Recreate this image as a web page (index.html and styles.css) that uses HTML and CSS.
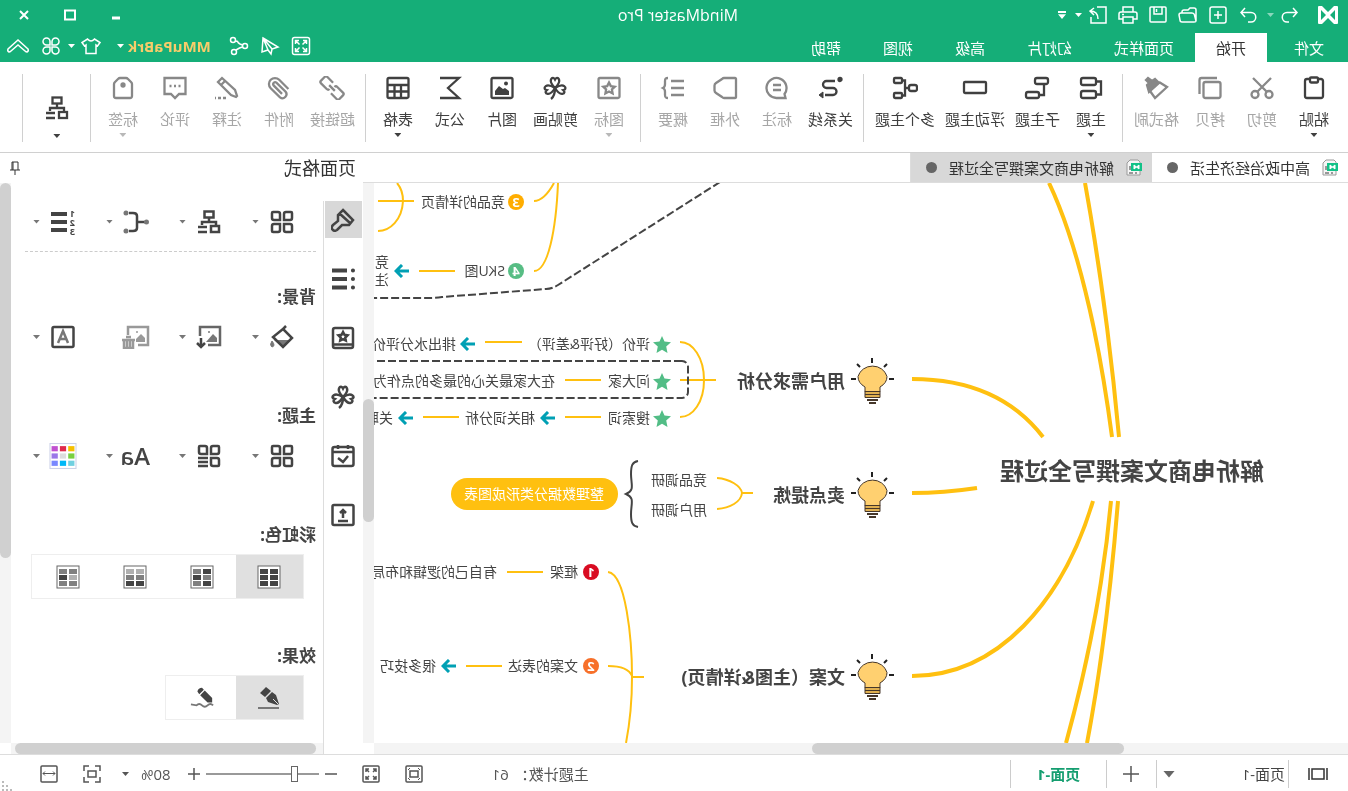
FILE: index.html
```html
<!DOCTYPE html>
<html lang="zh-CN">
<head>
<meta charset="utf-8">
<title>MindMaster Pro</title>
<link rel="stylesheet" href="styles.css">
</head>
<body>
<svg class="defs" aria-hidden="true">
  <symbol id="logo" viewBox="0 0 20 18"><path d="M0 1q0-1 1-1h3l6 6 6-6h3q1 0 1 1v16q0 1-1 1h-3l-6-6-6 6H1q-1 0-1-1z" fill="#fff"/><path d="M3 4v10l5-5zM17 4v10l-5-5z" fill="#15ae78"/></symbol>
  <symbol id="undo" viewBox="0 0 20 20"><path d="M7 3 3 7.500 7 12M3 7.500h10a4.500 4.500 0 0 1 0 9.500h-2"/></symbol>
  <symbol id="redo" viewBox="0 0 20 20"><path d="m13 3 4 4.500-4 4.500M17 7.500H7a4.500 4.500 0 0 0 0 9.500h3"/></symbol>
  <symbol id="new" viewBox="0 0 20 20"><rect x="2" y="2" width="16" height="16" rx="2"/><path d="M10 6v8M6 10h8"/></symbol>
  <symbol id="open" viewBox="0 0 20 20"><path d="M2 16V5q0-2 2-2h4l2 2h4q2 0 2 2v1M2 16q0 1 2 1h12q2 0 2-2l1-5q0-2-2-2H6Q4 8 3.500 10z"/></symbol>
  <symbol id="save" viewBox="0 0 20 20"><rect x="2" y="2" width="16" height="15" rx="1"/><path d="M6 2v7h8V2M11.500 4v3"/></symbol>
  <symbol id="print" viewBox="0 0 20 20"><path d="M5 7V2h10v5M5 14H1V9q0-2 2-2h14q2 0 2 2v5h-4M5 12h10v6H5zM14 9.500h2"/></symbol>
  <symbol id="export" viewBox="0 0 20 20"><path d="M11 2H2v16h15v-6M14 3l4 3-4 4M18 6c-5 0-8 2-8 8"/></symbol>
  <symbol id="full" viewBox="0 0 20 20"><rect x="1.500" y="1.500" width="17" height="17" rx="2"/><path d="M4.500 8V4.500H8M12 4.500h3.500V8M15.500 12v3.500H12M8 15.500H4.500V12M5 5l3.500 3.500M15 5l-3.500 3.500M15 15l-3.500-3.500M5 15l3.500-3.500"/></symbol>
  <symbol id="send" viewBox="0 0 20 20"><path d="M17 2 2 11l6 2 1 5 3-4 6 2zM8 13l9-11-5 12"/></symbol>
  <symbol id="share" viewBox="0 0 20 20"><circle cx="4" cy="10" r="2.500"/><circle cx="16" cy="4" r="2.500"/><circle cx="15" cy="16" r="2.500"/><path d="M6.500 9 9 8q2-1 2.500-2.500L13.500 5M6.500 11l3 1 3.500 2"/></symbol>
  <symbol id="shirt" viewBox="0 0 20 20"><path d="M6.500 3Q10 7 13.500 3L19 6.500 16.500 10 15 9v8.500H5V9l-1.500 1L1 6.500z"/></symbol>
  <symbol id="apps" viewBox="0 0 20 20"><path d="M9 9H5.500A3.500 3.500 0 1 1 9 5.500zM11 9h3.500A3.500 3.500 0 1 0 11 5.500zM9 11H5.500A3.500 3.500 0 1 0 9 14.500zM11 11h3.500a3.500 3.500 0 1 1-3.500 3.500z"/></symbol>
  <symbol id="up" viewBox="0 0 24 20"><path d="M2 13 12 4l10 9q1 2-1 3-1 0-2-1l-7-6-7 6q-1 1-2 1-2-1-1-3z"/></symbol>

  <symbol id="paste" viewBox="0 0 24 24"><rect x="3" y="3" width="18" height="19" rx="2"/><rect x="8" y="1.500" width="8" height="5" rx="1" fill="#fff"/></symbol>
  <symbol id="cut" viewBox="0 0 24 24"><path d="m3 2 14 14M21 2 7 16"/><circle cx="5" cy="18.500" r="3.500"/><circle cx="19" cy="18.500" r="3.500"/></symbol>
  <symbol id="copy" viewBox="0 0 24 24"><rect x="1.500" y="6" width="17" height="16" rx="2"/><path d="M5 2h15.500q2 0 2 2v14"/></symbol>
  <symbol id="brush" viewBox="0 0 24 24"><path d="M9 6 1 11l12 11 5-7"/><path d="m22 4-2-2-4 3-3-2-4 4 10 9 2-7-2-2z" fill="currentColor"/></symbol>
  <symbol id="topic" viewBox="0 0 24 24"><rect x="7" y="2" width="15" height="7" rx="2"/><rect x="7" y="15" width="15" height="7" rx="2"/><path d="M7 5.500H2v13h5"/></symbol>
  <symbol id="sub" viewBox="0 0 24 24"><rect x="1" y="2" width="13" height="6" rx="2"/><rect x="10" y="16" width="13" height="6" rx="2"/><path d="M5 8v11h5"/></symbol>
  <symbol id="float" viewBox="0 0 24 24"><rect x="1" y="6" width="22" height="11" rx="1"/></symbol>
  <symbol id="multi" viewBox="0 0 26 24"><rect x="1" y="9" width="8" height="6" rx="2"/><rect x="16" y="2" width="8" height="5" rx="1"/><rect x="16" y="17" width="8" height="5" rx="1"/><path d="M9 12h4M16 4.500h-3v15h3"/></symbol>
  <symbol id="relation" viewBox="0 0 24 24"><path d="M7 5h8.500a3.500 3.500 0 0 1 0 7H9a3.500 3.500 0 0 0 0 7h8"/><path d="m19 16 4 3-4 3z" fill="currentColor" stroke-width="1"/><circle cx="2" cy="3.500" r="1.500" fill="currentColor"/></symbol>
  <symbol id="callout" viewBox="0 0 24 24"><path d="M4.500 18A10 10 0 1 1 12 22H3.500zM8 9h8M8 14h8"/></symbol>
  <symbol id="outer" viewBox="0 0 24 24"><path d="M2 2h11q1 0 2 1l6 4q1.500 1 1.500 2.500v5q0 1.500-1.500 2.500l-6 4q-1 1-2 1H2q-1 0-1-1V3q0-1 1-1z"/></symbol>
  <symbol id="summary" viewBox="0 0 24 24"><path d="M1 5h13M1 12h13M1 19h13M17 2c3 0 3 1 3 3v3c0 2 0 3 2 4-2 1-2 2-2 4v3c0 2 0 3-3 3"/></symbol>
  <symbol id="starbox" viewBox="0 0 24 24"><rect x="1.500" y="2" width="21" height="20" rx="1.500"/><path d="m12 6.500 1.800 3.600 4 .6-2.900 2.800.7 4L12 15.600l-3.600 1.900.7-4-2.900-2.800 4-.6z"/></symbol>
  <symbol id="clover" viewBox="0 0 24 24"><path d="M12 12C8 8 7 6 8 3.500 9 1 11 1.500 12 3.500c1-2 3-2.500 4 0C17 6 16 8 12 12z"/><path d="M12 12C8 8 7 6 8 3.500 9 1 11 1.500 12 3.500c1-2 3-2.500 4 0C17 6 16 8 12 12z" transform="rotate(104 12 12)"/><path d="M12 12C8 8 7 6 8 3.500 9 1 11 1.500 12 3.500c1-2 3-2.500 4 0C17 6 16 8 12 12z" transform="rotate(-104 12 12)"/><path d="M12 12q0 8 4 11"/></symbol>
  <symbol id="pic" viewBox="0 0 24 24"><rect x="1.500" y="2" width="21" height="20" rx="1.500"/><path d="M5 19v-4l4-3 2 1 4-3 4 5v4z" fill="currentColor" stroke="none"/><circle cx="8" cy="7.500" r="2" fill="currentColor" stroke="none"/></symbol>
  <symbol id="sigma" viewBox="0 0 24 24"><path d="M22 2H3l11 10L3 22h19"/></symbol>
  <symbol id="table" viewBox="0 0 24 24"><rect x="1.500" y="2" width="21" height="20" rx="1.500"/><path d="M2 9h20M2 15.500h20M9 9v13M15.500 9v13"/></symbol>
  <symbol id="link" viewBox="0 0 24 24"><path d="M8 12h8M9 16.500H1q-2 0-2-2v-5q0-2 2-2h8q2 0 2 2M15 7.500h8q2 0 2 2v5q0 2-2 2h-8q-2 0-2-2" transform="rotate(-45 12 12)"/></symbol>
  <symbol id="clip" viewBox="0 0 24 24"><path d="m21.400 11-9.200 9.200a6 6 0 0 1-8.500-8.500L13 2.600a4 4 0 0 1 5.600 5.600l-9.200 9.200a2 2 0 0 1-2.800-2.800L15 6.100" transform="rotate(180 12 12)"/></symbol>
  <symbol id="note" viewBox="0 0 24 24"><path d="m17 2 4 4L8 19l-5 2-1-1 2-6zM14 5l4 4"/><path d="M13 22h11" stroke-dasharray="3 2"/></symbol>
  <symbol id="comment" viewBox="0 0 24 24"><path d="M1.500 2h21v16H16l-4 4-4-4H1.500z"/><path d="M6.500 10h2M11 10h2M15.500 10h2"/></symbol>
  <symbol id="tag" viewBox="0 0 24 24"><path d="M9 2h6q1 0 2 1l3 3q1 1 1 2v12q0 2-2 2H5q-2 0-2-2V8q0-1 1-2l3-3q1-1 2-1z"/><circle cx="12" cy="9" r="1.500" fill="currentColor"/></symbol>
  <symbol id="org" viewBox="0 0 24 24"><rect x="7.500" y="1.500" width="9" height="6"/><path d="M12 8v4M5 15v-3h14v3M14 17h9M14 22h9"/><rect x="2" y="16" width="8" height="6"/></symbol>

  <symbol id="leaf4" viewBox="0 0 24 24"><path d="M3 2h5q2 0 2 2v6H4q-2 0-2-2V3q0-1 1-1zM16 2h5q1 0 1 1v5q0 2-2 2h-6V4q0-2 2-2zM4 14h6v6q0 2-2 2H3q-1 0-1-1v-5q0-2 2-2zM14 14h6q2 0 2 2v5q0 1-1 1h-5q-2 0-2-2z"/></symbol>
  <symbol id="leaf3" viewBox="0 0 24 24"><path d="M3 2h5q2 0 2 2v6H4q-2 0-2-2V3q0-1 1-1zM16 2h5q1 0 1 1v5q0 2-2 2h-6V4q0-2 2-2zM4 14h6v6q0 2-2 2H3q-1 0-1-1v-5q0-2 2-2zM13 14h10M13 18h10M13 22h10"/></symbol>
  <symbol id="branch" viewBox="0 0 26 24"><path d="M3 12h8M20 3h-4q-4 0-4 3v12q0 3 4 3h4"/><g fill="#777" stroke="none"><circle cx="2.500" cy="12" r="2.500"/><circle cx="23" cy="3" r="2.500"/><circle cx="23" cy="21" r="2.500"/></g></symbol>
  <symbol id="bucket" viewBox="0 0 24 24"><path d="M5 15h15l-8 7z" fill="#777" stroke="none"/><path d="m11 4 10 8-10 10L2 13l9-9-3-3"/><path d="M22 16q3 4 0 6-4-1 0-6z" fill="#777" stroke="#777" stroke-width="1"/></symbol>
  <symbol id="imgdown" viewBox="0 0 26 24"><path d="M14 20H2V2h20v9" stroke="#666"/><path d="M5 17v-4l4-4 7 8z" fill="#777" stroke="none"/><circle cx="13" cy="7" r="1" fill="#777" stroke="none"/><path d="M21 13v9M17 18l4 4 4-4"/></symbol>
  <symbol id="imgdel" viewBox="0 0 28 24"><path d="M12 20H2V2h20v8"/><path d="M5 17v-4l4-4 5 5v3z" fill="currentColor" stroke="none"/><circle cx="13" cy="7" r="1" fill="currentColor" stroke="none"/><path d="M15 15h13M19 12h5M17 16v7h9v-7M20 16v6M23 16v6"/></symbol>
  <symbol id="boxa" viewBox="0 0 24 24"><rect x="1.500" y="2" width="21" height="20" rx="1.500"/><path d="m7 18 5-12 5 12M9 14h6" stroke="#777"/></symbol>
  <symbol id="palette" viewBox="0 0 26 25"><rect x=".5" y=".5" width="25" height="24" fill="#fff" stroke="#ccd2e8" stroke-width="1"/><g stroke="none"><path fill="#f5c000" d="M2 3h6v5H2z"/><path fill="#e02a4c" d="M10 3h6v5h-6z"/><path fill="#c050d0" d="M18 3h6v5h-6z"/><path fill="#78d040" d="M2 10h6v5H2z"/><path fill="#ddd" d="M10 10h6v5h-6z"/><path fill="#9a78e8" d="M18 10h6v5h-6z"/><path fill="#70d0e0" d="M2 17h6v5H2z"/><path fill="#00b8f8" d="M10 17h6v5h-6z"/><path fill="#7888ff" d="M18 17h6v5h-6z"/></g></symbol>

  <symbol id="paint" viewBox="0 0 24 24"><path d="M12 2 2 12l4 5h4l3 0 5 5q3 2 5-1 1-2-1-4l-5-4V7zM5 15 16 5"/></symbol>
  <symbol id="dots" viewBox="0 0 24 24"><path d="M8 3.500h15M8 12h15M8 20.500h15" stroke-width="4"/><path d="M2 3.500h.1M2 12h.1M2 20.500h.1" stroke-width="4" stroke-linecap="round"/></symbol>
  <symbol id="book" viewBox="0 0 24 24"><rect x="2" y="2" width="20" height="20" rx="2"/><path d="M2 18.500h20"/><path d="m12 6 1.500 2.800 3 .5-2.200 2.200.5 3.100-2.800-1.400-2.800 1.400.5-3.100-2.200-2.200 3-.5z"/></symbol>
  <symbol id="cal" viewBox="0 0 24 24"><rect x="1.500" y="3" width="21" height="19" rx="2"/><path d="M2 8h20M7 1v4M17 1v4M7 12l5 6 5-4" transform="translate(0 0)"/></symbol>
  <symbol id="upload" viewBox="0 0 24 24"><rect x="1.500" y="2" width="21" height="20" rx="1.500"/><path d="M12 15V8M7 18h10M9 10l3-3 3 3"/></symbol>
  <symbol id="pin" viewBox="0 0 12 14"><path d="M3 1h6v8M3 1v8M1 9h10M6 9v5M8 1v8" stroke-width="1"/></symbol>

  <symbol id="pen" viewBox="0 0 24 24"><path d="M2 22h21" stroke="#777"/><path d="m2 18 3-9 4-3 6 6-2 4-9 3zM10 5l5-4 6 6-5 4z" fill="currentColor" stroke="none"/><path d="m3 18 5-5" stroke="#e0e0e0" stroke-width="1"/></symbol>
  <symbol id="crayon" viewBox="0 0 26 24"><path d="M1 20q3-3 6 0t6 0 6 0l6-1" stroke="#777"/><path d="M2 17v-5l8-8 5 5-8 8zM11 3l2-2q4 0 5 4l-2 3z" fill="currentColor" stroke="none"/></symbol>

  <symbol id="pages" viewBox="0 0 20 14"><path d="M1 1v12M19 1v12M4 2h12v10H4z"/></symbol>
  <symbol id="fit" viewBox="0 0 18 18"><rect x="1" y="1" width="16" height="16" rx="1"/><rect x="5" y="6" width="8" height="6"/><path d="M3 5l2-2M15 5l-2-2M3 13l2 2M15 13l-2 2" stroke-width="1"/></symbol>
  <symbol id="full2" viewBox="0 0 18 18"><rect x="1" y="1" width="16" height="16" rx="1"/><path d="M4 7V4h3M11 4h3v3M14 11v3h-3M7 14H4v-3M4 4l3 3M14 4l-3 3M14 14l-3-3M4 14l3-3"/></symbol>
  <symbol id="focus" viewBox="0 0 18 18"><path d="M1 6V1h5M12 1h5v5M17 12v5h-5M6 17H1v-5"/><rect x="5" y="6" width="8" height="6"/></symbol>
  <symbol id="wide" viewBox="0 0 18 18"><rect x="1" y="1" width="16" height="16" rx="1"/><path d="M3 8.500h12M5 6.500l-2 2 2 2M13 6.500l2 2-2 2" stroke-width="1"/></symbol>
  <symbol id="doc" viewBox="0 0 16 17"><path d="M4 1h8l3 3v12H2V3z" fill="#f5f5f5" stroke="#999" stroke-width="1"/><path d="M9 14h4M12 7v4M5 14h2" stroke="#999"/><path d="M0 4h11v8H0z" fill="#12c288" stroke="none"/><path d="M3 10V6l2.500 2L8 6v4L5.500 8z" fill="#fff" stroke="#fff" stroke-width="1"/></symbol>

  <symbol id="bulb" viewBox="0 0 44 48"><path d="M14 34v-5q-7-4-7-10.500a15 14 0 0 1 29 0Q36 25 29 29v5z" fill="#ffd070" stroke="#46372a" stroke-width="1"/><path d="M14 33.500h15v6H14z" fill="#e0b050" stroke="#46372a" stroke-width="1"/><path d="M14 36.500h15" stroke="#46372a" stroke-width="1"/><path d="M16 42h11M18 45h7" stroke="#46372a" stroke-width="2"/><path d="M22 0v5M7 6l3 3M37 6l-3 3M0 21h5M38 21h5" stroke="#222" stroke-width="2"/></symbol>
  <symbol id="arrow" viewBox="0 0 15 14"><path d="M0 7h12M7 1l6 6-6 6" fill="none" stroke="#00a0b4" stroke-width="3"/></symbol>
  <symbol id="star" viewBox="0 0 18 17"><path d="m9 0 2.500 5.500 6.500.8-4.800 4.200L14.500 17 9 13.800 3.500 17l1.300-6.500L0 6.300l6.500-.8z" fill="#52bd86"/></symbol>
</svg>

<header class="head">
  <div class="titlebar">
    <div class="quick">
      <svg class="logo"><use href="#logo"/></svg>
      <button class="q" aria-label="撤销"><svg><use href="#undo"/></svg></button>
      <i class="tri dim"></i>
      <button class="q" aria-label="重做"><svg><use href="#redo"/></svg></button>
      <button class="q" aria-label="新建"><svg><use href="#new"/></svg></button>
      <button class="q" aria-label="打开"><svg><use href="#open"/></svg></button>
      <button class="q" aria-label="保存"><svg><use href="#save"/></svg></button>
      <button class="q" aria-label="打印"><svg><use href="#print"/></svg></button>
      <button class="q" aria-label="导出"><svg><use href="#export"/></svg></button>
      <i class="tri"></i>
      <i class="tri bar"></i>
    </div>
    <h1 class="apptitle">MindMaster Pro</h1>
    <div class="winctl">
      <button aria-label="最小化"><svg viewBox="0 0 12 12"><path d="M2 9h8" stroke-width="3"/></svg></button>
      <button aria-label="最大化"><svg viewBox="0 0 12 12"><path d="M1 1.500h10v9H1z"/></svg></button>
      <button aria-label="关闭"><svg viewBox="0 0 12 12"><path d="m2 2 8 8M10 2l-8 8"/></svg></button>
    </div>
  </div>
  <div class="menubar">
    <nav class="menus">
      <button class="file">文件</button><button class="on">开始</button><button>页面样式</button><button>幻灯片</button><button>高级</button><button>视图</button><button>帮助</button>
    </nav>
    <div class="account">
      <button class="q" aria-label="全屏"><svg><use href="#full"/></svg></button>
      <button class="q" aria-label="发送"><svg><use href="#send"/></svg></button>
      <button class="q" aria-label="分享"><svg><use href="#share"/></svg></button>
      <button class="user">MMuPaBrk<i class="tri"></i></button>
      <button class="q skin" aria-label="皮肤"><svg><use href="#shirt"/></svg></button>
      <i class="tri"></i>
      <button class="q" aria-label="应用"><svg><use href="#apps"/></svg></button>
      <button class="q fold" aria-label="收起"><svg><use href="#up"/></svg></button>
    </div>
  </div>
</header>

<section class="ribbon">
  <button><svg><use href="#paste"/></svg><span>粘贴</span><i class="tri"></i></button>
  <button class="off"><svg><use href="#cut"/></svg><span>剪切</span></button>
  <button class="off"><svg><use href="#copy"/></svg><span>拷贝</span></button>
  <button class="off"><svg><use href="#brush"/></svg><span>格式刷</span></button>
  <hr>
  <button><svg><use href="#topic"/></svg><span>主题</span><i class="tri"></i></button>
  <button><svg><use href="#sub"/></svg><span>子主题</span></button>
  <button><svg><use href="#float"/></svg><span>浮动主题</span></button>
  <button><svg><use href="#multi"/></svg><span>多个主题</span></button>
  <hr>
  <button><svg><use href="#relation"/></svg><span>关系线</span></button>
  <button class="off"><svg><use href="#callout"/></svg><span>标注</span></button>
  <button class="off"><svg><use href="#outer"/></svg><span>外框</span></button>
  <button class="off"><svg><use href="#summary"/></svg><span>概要</span></button>
  <hr>
  <button class="off"><svg><use href="#starbox"/></svg><span>图标</span><i class="tri"></i></button>
  <button><svg><use href="#clover"/></svg><span>剪贴画</span></button>
  <button><svg><use href="#pic"/></svg><span>图片</span></button>
  <button><svg><use href="#sigma"/></svg><span>公式</span></button>
  <button><svg><use href="#table"/></svg><span>表格</span><i class="tri"></i></button>
  <hr>
  <button class="off"><svg><use href="#link"/></svg><span>超链接</span></button>
  <button class="off"><svg><use href="#clip"/></svg><span>附件</span></button>
  <button class="off"><svg><use href="#note"/></svg><span>注释</span></button>
  <button class="off"><svg><use href="#comment"/></svg><span>评论</span></button>
  <button class="off"><svg><use href="#tag"/></svg><span>标签</span><i class="tri"></i></button>
  <hr>
  <button class="layout" aria-label="布局"><svg><use href="#org"/></svg><i class="tri"></i></button>
  <hr>
</section>

<main class="main">
  <section class="work">
    <div class="doctabs">
      <button><svg><use href="#doc"/></svg>高中政治经济生活<i class="dot"></i></button>
      <button class="on"><svg><use href="#doc"/></svg>解析电商文案撰写全过程<i class="dot"></i></button>
    </div>
    <div class="canvas">
      <svg class="map" viewBox="0 183 974 560" width="974" height="560">
        <g class="thick">
          <path d="M299 183C272 240 250 330 236 437M263 183C250 255 238 340 229 437M237 501C245 590 262 670 282 743M230 501C238 600 249 680 261 743"/>
          <path d="M436 379C380 379 335 398 305 437M436 493C410 493 391 491 371 488M436 676C350 676 285 601 255 501" />
        </g>
        <g class="thin">
          <path d="M794 183Q804 201 814 201M790 183C792 230 800 271 814 271M951 183Q945 190 945 201C946 220 958 231 970 231M934 201H970M893 271H929"/>
          <path d="M668 342C655 342 644 358 644 380C644 402 655 417 668 417M632 380H668M826 342H863M747 380H783M747 417H783M889 417H925"/>
          <path d="M631 478C618 479 607 486 606 493C607 502 618 508 631 509M595 493H606"/>
          <path d="M740 572C722 574 716 640 716 677C716 700 718 722 722 743M704 677H716M740 666Q720 666 716 676M805 572H841M846 666H882"/>
        </g>
        <path class="dash" d="M628 182 790 285Q796 289 802 289L906 297Q912 298 918 298H980"/>
        <rect class="dash" x="660" y="361" width="400" height="37" rx="6"/>
        <path class="brace" d="M710 461C716 462 717 466 717 474C717 485 713 490 722 494C713 498 717 503 717 514C717 522 716 526 710 527"/>
        <text class="t0" x="84" y="480">解析电商文案撰写全过程</text>
        <use href="#bulb" x="454" y="358" width="44" height="48"/>
        <use href="#bulb" x="454" y="472" width="44" height="48"/>
        <use href="#bulb" x="454" y="654" width="44" height="48"/>
        <g class="t1"><text x="503" y="388">用户需求分析</text><text x="503" y="502">卖点提炼</text><text x="503" y="684">文案（主图&amp;详情页)</text></g>
        <rect x="730" y="478" width="167" height="32" rx="16" fill="#ffc010"/>
        <g class="t2">
          <text x="843" y="207">竞品的详情页</text><text x="843" y="276">SKU图</text><text x="959" y="267">竞</text><text x="959" y="285">注</text>
          <text x="698" y="349">评价（好评&amp;差评）</text><text x="892" y="349">排出水分评价</text>
          <text x="698" y="386">问大家</text><text x="793" y="386">在大家最关心的最多的点作为差</text>
          <text x="698" y="423">搜索词</text><text x="813" y="423">相关词分析</text><text x="955" y="423">关联</text>
          <text x="641" y="485">竞品调研</text><text x="641" y="515">用户调研</text>
          <text class="w" x="744" y="499">整理数据分类形成图表</text>
          <text x="770" y="577">框架</text><text x="851" y="577">有自己的逻辑和布局</text>
          <text x="770" y="671">文案的表达</text><text x="912" y="671">很多技巧</text>
        </g>
        <circle cx="832" cy="202" r="8" fill="#ffad00"/><circle cx="832" cy="271" r="8" fill="#57bd84"/><circle cx="757" cy="572" r="8" fill="#d90c22"/><circle cx="757" cy="666" r="8" fill="#f7702a"/>
        <g class="num"><text x="832" y="207">3</text><text x="832" y="276">4</text><text x="757" y="577">1</text><text x="757" y="671">2</text></g>
        <use href="#star" x="677" y="336" width="18" height="17"/><use href="#star" x="677" y="373" width="18" height="17"/><use href="#star" x="677" y="410" width="18" height="17"/>
        <use href="#arrow" x="873" y="337" width="15" height="14"/><use href="#arrow" x="793" y="411" width="15" height="14"/><use href="#arrow" x="935" y="411" width="15" height="14"/><use href="#arrow" x="939" y="264" width="15" height="14"/><use href="#arrow" x="892" y="659" width="15" height="14"/>
      </svg>
    </div>
    <div class="vbar"><i class="vthumb mid"></i></div>
    <div class="hbar"><i class="hthumb"></i></div>
  </section>

  <aside class="panel">
    <div class="phead"><h2>页面格式</h2><button aria-label="固定"><svg><use href="#pin"/></svg></button></div>
    <div class="ptabs">
      <button class="on" aria-label="格式"><svg><use href="#paint"/></svg></button>
      <button aria-label="大纲"><svg><use href="#dots"/></svg></button>
      <button aria-label="图标"><svg><use href="#book"/></svg></button>
      <button aria-label="剪贴画"><svg><use href="#clover"/></svg></button>
      <button aria-label="任务"><svg><use href="#cal"/></svg></button>
      <button aria-label="导出"><svg><use href="#upload"/></svg></button>
    </div>
    <div class="pbody">
      <div class="tools first">
        <button aria-label="布局"><svg><use href="#leaf4"/></svg><i class="tri"></i></button>
        <button aria-label="结构"><svg><use href="#org"/></svg><i class="tri"></i></button>
        <button aria-label="连线"><svg><use href="#branch"/></svg><i class="tri"></i></button>
        <button aria-label="编号"><svg class="numlist" viewBox="0 0 24 26"><path d="M8 5h16M8 13h16M8 21h16"/><text x="0" y="8">1</text><text x="0" y="17">2</text><text x="0" y="26">3</text></svg><i class="tri"></i></button>
      </div>
      <h3>背景:</h3>
      <div class="tools">
        <button aria-label="填充"><svg><use href="#bucket"/></svg><i class="tri"></i></button>
        <button aria-label="插入图片"><svg><use href="#imgdown"/></svg><i class="tri"></i></button>
        <button class="off" aria-label="删除图片"><svg><use href="#imgdel"/></svg></button>
        <button aria-label="水印"><svg><use href="#boxa"/></svg><i class="tri"></i></button>
      </div>
      <h3>主题:</h3>
      <div class="tools">
        <button aria-label="主题"><svg><use href="#leaf4"/></svg><i class="tri"></i></button>
        <button aria-label="主题样式"><svg><use href="#leaf3"/></svg><i class="tri"></i></button>
        <button aria-label="字体"><b class="aa">Aa</b><i class="tri"></i></button>
        <button aria-label="颜色"><svg class="pal"><use href="#palette"/></svg><i class="tri"></i></button>
      </div>
      <h3>彩虹色:</h3>
      <div class="seg">
        <button class="on" aria-label="彩虹色 1"><svg viewBox="0 0 24 24"><rect x="1" y="1" width="22" height="22"/><path class="d" d="M3 4h8v5H3zM13 4h8v5h-8zM3 10h8v5H3zM13 10h8v5h-8zM3 16h8v5H3zM13 16h8v5h-8z"/></svg></button>
        <button aria-label="彩虹色 2"><svg viewBox="0 0 24 24"><rect x="1" y="1" width="22" height="22"/><path class="d" d="M3 4h8v5H3zM13 10h8v5h-8zM3 16h8v5H3z"/><path class="m" d="M13 4h8v5h-8zM3 10h8v5H3zM13 16h8v5h-8z"/></svg></button>
        <button aria-label="彩虹色 3"><svg viewBox="0 0 24 24"><rect x="1" y="1" width="22" height="22"/><path class="l" d="M3 4h8v5H3zM13 4h8v5h-8z"/><path class="m" d="M3 10h8v5H3zM13 10h8v5h-8z"/><path class="d" d="M3 16h8v5H3zM13 16h8v5h-8z"/></svg></button>
        <button aria-label="彩虹色 4"><svg viewBox="0 0 24 24"><rect x="1" y="1" width="22" height="22"/><path class="l" d="M3 10h8v5H3z"/><path class="m" d="M3 4h8v5H3zM13 4h8v5h-8zM3 16h8v5H3zM13 16h8v5h-8z"/><path class="d" d="M13 10h8v5h-8z"/></svg></button>
      </div>
      <h3>效果:</h3>
      <div class="seg">
        <button class="on" aria-label="普通"><svg><use href="#pen"/></svg></button>
        <button aria-label="手绘"><svg><use href="#crayon"/></svg></button>
      </div>
    </div>
    <div class="vbar"><i class="vthumb top"></i></div>
    <div class="hbar"><i class="hthumb"></i></div>
  </aside>
</main>

<footer class="status">
  <button class="pg" aria-label="页面列表"><svg><use href="#pages"/></svg></button>
  <button class="pagesel"><span>页面-1</span><i class="tri"></i></button>
  <button class="add" aria-label="新建页面"><svg viewBox="0 0 16 16"><path d="M8 0v16M0 8h16"/></svg></button>
  <button class="cur">页面-1</button>
  <div class="right">
    <p class="count"><span>主题计数：</span><span>61</span></p>
    <button aria-label="适应窗口"><svg><use href="#fit"/></svg></button>
    <button aria-label="全屏"><svg><use href="#full2"/></svg></button>
    <div class="zoom">
      <button aria-label="缩小"><svg viewBox="0 0 12 12"><path d="M0 6h12"/></svg></button>
      <input type="range" min="0" max="100" value="19" aria-label="缩放">
      <button aria-label="放大"><svg viewBox="0 0 12 12"><path d="M0 6h12M6 0v12"/></svg></button>
    </div>
    <button class="pct">80%<i class="tri"></i></button>
    <button aria-label="聚焦"><svg><use href="#focus"/></svg></button>
    <button aria-label="适应宽度"><svg><use href="#wide"/></svg></button>
  </div>
  <svg class="grip" viewBox="0 0 12 10"><path d="M10 0h2v2h-2zM10 4h2v2h-2zM6 4h2v2H6zM10 8h2v2h-2zM6 8h2v2H6zM2 8h2v2H2z"/></svg>
</footer>
</body>
</html>
```

FILE: styles.css
```css
* { box-sizing: border-box; margin: 0; padding: 0; }

body {
  display: flex;
  flex-direction: column;
  height: 100vh;
  overflow: hidden;
  background: #fff;
  color: #333;
  font: 15px/20px "Open Sans", "Noto Sans CJK SC", sans-serif;
  /* mirrored window */
  transform: scaleX(-1);
}

.defs { position: absolute; width: 0; height: 0; }
svg { display: block; flex: none; fill: none; stroke: currentColor; stroke-width: 2; }
button { display: flex; align-items: center; justify-content: center; border: 0; background: none; color: inherit; font: inherit; white-space: nowrap; }

.tri { flex: none; width: 7px; height: 4px; background: currentColor; clip-path: polygon(0 0, 100% 0, 50% 100%); }
.tri.dim { opacity: .5; }
.tri.bar { width: 8px; height: 8px; clip-path: polygon(0 0, 100% 0, 100% 25%, 0 25%, 0 40%, 100% 40%, 50% 100%, 0 40%); }

/* header */
.head { flex: none; height: 62px; background: #15ae78; color: #fff; }
.titlebar { display: flex; align-items: center; height: 30px; }
.quick { display: flex; flex: 1; align-items: center; gap: 10px; padding-left: 10px; }
.logo { width: 20px; height: 18px; margin-right: 8px; stroke: none; }
.q svg { width: 20px; height: 20px; stroke-width: 1.5; }
.quick .tri { margin: 0 -1px 0 -4px; }
.quick .tri.bar { margin-left: 0; }
.apptitle { font-size: 16px; font-weight: 400; }
.winctl { display: flex; flex: 1; justify-content: flex-end; gap: 34px; padding-right: 18px; }
.winctl svg { width: 12px; height: 12px; }

.menubar { display: flex; justify-content: space-between; height: 32px; }
.menus { display: flex; align-items: flex-end; padding-left: 3px; }
.menus button { height: 29px; padding: 0 21px; }
.menus .file { margin-right: 6px; }
.menus .on { background: #fff; color: #333; }
.account { display: flex; align-items: center; gap: 11px; padding-right: 6px; }
.user { gap: 4px; margin-left: 7px; color: #f8cc6a; font-weight: 700; }
.user .tri { color: #fff; }
.skin { margin-left: 5px; }
.account > .tri { margin: 0 -4px 0 -5px; }
.fold svg { width: 24px; }

/* ribbon */
.ribbon { display: flex; flex: none; height: 91px; padding: 12px 0 0 8px; border-bottom: 1px solid #d0d0d0; color: #404040; }
.ribbon button { flex-direction: column; justify-content: flex-start; min-width: 52px; height: 68px; padding: 2px 5px 0; }
.ribbon svg { width: 26px; height: 24px; stroke-width: 2.3; }
.ribbon span { margin: 9px 0 4px; line-height: 20px; }
.ribbon .off { color: #888; }
.ribbon .off span { color: #a6a6a6; }
.ribbon .off .tri { opacity: .6; }
.ribbon hr { width: 1px; height: 68px; margin: 0 5px 0 6px; border: 0; background: #d0d0d0; }
.ribbon .layout { width: 56px; padding-top: 22px; }
.ribbon .layout .tri { margin-top: 14px; }

/* work area */
.main { display: flex; flex: 1; min-height: 0; }
.work { display: grid; flex: 1; min-width: 0; grid-template: 30px 1fr 11px / 1fr 11px; }
.doctabs { display: flex; grid-column: 1 / 3; border-bottom: 1px solid #ddd; }
.doctabs button { gap: 12px; padding: 0 15px 0 10px; }
.doctabs .on { background: #d8d8d8; }
.doctabs button + button { border-right: 1px solid #ddd; }
.doctabs svg { width: 16px; height: 17px; }
.dot { width: 11px; height: 11px; border-radius: 50%; background: #666; }
.canvas { overflow: hidden; min-width: 0; min-height: 0; }
.vbar, .hbar { background: #f4f4f4; }
.vthumb, .hthumb { display: block; border-radius: 6px; background: #d0d0d0; }
.vthumb { width: 11px; }
.hthumb { height: 11px; }
.vthumb.mid { height: 22%; margin-top: 216px; }
.vthumb.top { height: 67%; }
.work .hthumb { width: 32%; margin-left: 23%; }

/* mind map */
.map text { fill: #444; stroke: none; }
.map use, .map circle { stroke: none; }
.map rect { stroke: none; }
.map .thick { stroke: #ffc010; stroke-width: 4; }
.map .thin { stroke: #ffc010; stroke-width: 2; }
.map .dash { stroke: #444; stroke-width: 2; stroke-dasharray: 8 3; }
.map .brace { stroke: #444; }
.map .t0 { font-size: 24px; font-weight: 700; }
.map .t1 { font-size: 18px; font-weight: 700; }
.map .t2 { font-size: 14px; }
.map .t2 .w { fill: #fff; }
.map .num text { fill: #fff; font-size: 13px; font-weight: 700; text-anchor: middle; }

/* format panel */
.panel { display: grid; flex: none; width: 363px; grid-template: 30px 1fr 11px / 40px 1fr 11px; color: #444; }
.phead { display: flex; grid-column: 1 / 4; justify-content: space-between; padding: 0 9px 0 7px; color: #333; }
.phead h2 { font-size: 18px; font-weight: 400; line-height: 30px; }
.phead svg { width: 12px; height: 14px; }
.ptabs { display: flex; grid-row: 2 / 4; flex-direction: column; gap: 22px; margin-top: 18px; padding-left: 1px; border-right: 1px solid #ddd; }
.ptabs button { width: 37px; height: 37px; }
.ptabs .on { background: #d8d8d8; }
.ptabs svg { width: 24px; height: 24px; stroke-width: 2.5; }
.pbody { min-height: 0; overflow: hidden; padding: 0 0 0 7px; }
.tools { display: grid; grid-template-columns: repeat(4, 73px); height: 50px; margin-top: 4px; }
.tools.first { height: 69px; margin: 0 14px 0 0; padding-top: 9px; border-bottom: 1px dashed #ccc; }
.tools button { justify-content: flex-start; gap: 9px; padding-left: 20px; }
.tools svg, .aa { width: 28px; height: 24px; stroke-width: 2.5; }
.tools .pal { height: 26px; }
.tools .tri { color: #777; }
.tools .off { color: #999; }
.aa { font-size: 24px; font-weight: 600; line-height: 24px; }
.tools .numlist { height: 26px; stroke-width: 4; }
.numlist text { fill: currentColor; stroke: none; font-size: 9px; font-weight: 700; }
.pbody h3 { margin-top: 35px; font-size: 17px; font-weight: 700; line-height: 22px; }
.tools + h3 { margin-top: 43px; }
.tools.first + h3 { margin-top: 34px; }
.seg { display: flex; width: max-content; margin: 8px 0 0 12px; padding-right: 3px; border: 1px solid #eee; }
.seg + h3 { margin-top: 46px; }
.seg button { width: 67px; height: 43px; }
.seg .on { background: #e0e0e0; }
.seg svg { width: 24px; height: 24px; }
.seg rect { stroke: #666; stroke-width: 1; fill: #fff; }
.seg .d { fill: #444; stroke: none; }
.seg .m { fill: #808080; stroke: none; }
.seg .l { fill: #b0b0b0; stroke: none; }
.panel .hthumb { margin: 0 4px 0 7px; }

/* status bar */
.status { position: relative; display: flex; flex: none; align-items: center; height: 37px; padding-top: 2px; border-top: 1px solid #ddd; color: #555; }
.status > button { height: 28px; border-right: 1px solid #ccc; }
.status svg { width: 18px; height: 18px; stroke-width: 1.5; }
.status .pg { width: 60px; color: #333; }
.status .pg svg { width: 20px; height: 14px; }
.status .pagesel { width: 132px; justify-content: space-between; padding: 0 6px 0 3px; color: #444; }
.pagesel .tri { width: 12px; height: 7px; background: #666; }
.status .add { width: 50px; }
.status .add svg { width: 16px; height: 16px; }
.status .cur { width: 96px; color: #159e70; font-weight: 700; }
.right { display: flex; flex: 1; align-items: center; justify-content: flex-end; gap: 25px; padding-right: 40px; }
.count { display: flex; gap: 5px; margin-right: 44px; }
.zoom { display: flex; align-items: center; gap: 6px; }
.status .zoom svg { width: 12px; height: 12px; }
.zoom input { width: 113px; height: 16px; appearance: none; background: linear-gradient(#999, #999) center / 100% 2px no-repeat; }
.zoom input::-webkit-slider-thumb { appearance: none; width: 7px; height: 16px; border: 1px solid #666; background: #fff; }
.pct { gap: 12px; margin: 0 -4px 0 -8px; }
.status .grip { position: absolute; right: 2px; bottom: 0; width: 12px; height: 10px; fill: #bbb; stroke: none; }
```
